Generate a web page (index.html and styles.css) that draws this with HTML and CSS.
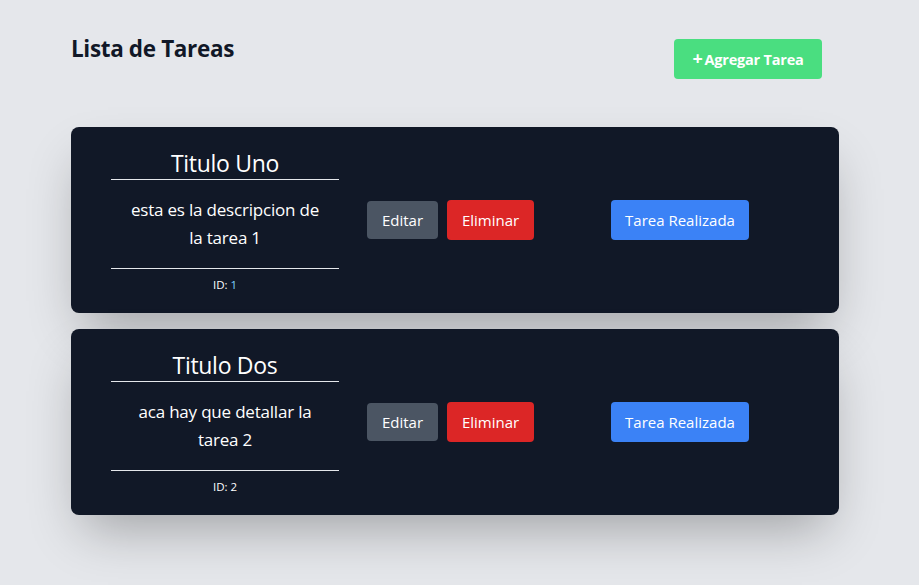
FILE: index.html
```html
<!DOCTYPE html>
<html lang="es">
<head>
<meta charset="utf-8">
<title>Lista de Tareas</title>
<link rel="stylesheet" href="styles.css">
</head>
<body>
<main class="page">
  <header class="header">
    <h1 class="page-title">Lista de Tareas</h1>
    <button class="btn btn-add"><span class="plus">+</span>Agregar Tarea</button>
  </header>
  <section class="list">
    <article class="card">
      <div class="info">
        <h2 class="task-title">Titulo Uno</h2>
        <p class="task-desc">esta es la descripcion de la tarea 1</p>
        <p class="task-id">ID: <span class="id-num">1</span></p>
      </div>
      <div class="actions">
        <button class="btn btn-edit">Editar</button>
        <button class="btn btn-delete">Eliminar</button>
      </div>
      <button class="btn btn-done">Tarea Realizada</button>
    </article>
    <article class="card">
      <div class="info">
        <h2 class="task-title">Titulo Dos</h2>
        <p class="task-desc">aca hay que detallar la tarea 2</p>
        <p class="task-id">ID: 2</p>
      </div>
      <div class="actions">
        <button class="btn btn-edit">Editar</button>
        <button class="btn btn-delete">Eliminar</button>
      </div>
      <button class="btn btn-done">Tarea Realizada</button>
    </article>
  </section>
</main>
</body>
</html>
```
FILE: styles.css
```css
* { box-sizing: border-box; }
html, body {
  margin: 0;
  padding: 0;
  background: #e5e7eb;
  font-family: "Open Sans", "Noto Sans", sans-serif;
  color: #111827;
}
body { min-height: 100vh; }
.page {
  width: 768px;
  margin-left: 71px;
  padding-top: 33px;
  padding-bottom: 70px;
}
.header {
  display: flex;
  justify-content: space-between;
  align-items: flex-start;
  padding-right: 17px;
  margin-bottom: 48px;
}
.page-title {
  margin: 0;
  font-size: 22.5px;
  line-height: 32px;
  font-weight: 700;
  letter-spacing: -0.35px;
  color: #111827;
}
.btn {
  border: none;
  border-radius: 4px;
  font-family: inherit;
  font-size: 15px;
  color: #ffffff;
  height: 40px;
  padding: 0 16px;
  cursor: pointer;
}
.btn-add {
  margin-top: 6px;
  width: 148px;
  background: #4ade80;
  font-weight: 700;
  font-size: 14.5px;
  letter-spacing: -0.2px;
  display: flex;
  align-items: center;
  justify-content: center;
  gap: 2px;
}
.plus { font-size: 18px; font-weight: 700; line-height: 1; margin-top: -2px; }
.list {
  display: flex;
  flex-direction: column;
  gap: 16px;
}
.card {
  background: #111827;
  border-radius: 8px;
  padding: 20px 40px;
  display: flex;
  align-items: center;
  box-shadow: 0 25px 50px -12px rgba(0, 0, 0, 0.3);
}
.info {
  width: 228px;
  text-align: center;
  color: #ffffff;
}
.task-title {
  margin: 0;
  font-size: 23px;
  line-height: 32px;
  font-weight: 400;
  letter-spacing: -0.3px;
  border-bottom: 1px solid #e5e7eb;
}
.task-desc {
  margin: 0;
  padding: 16px 16px;
  font-size: 17px;
  line-height: 28px;
  letter-spacing: -0.2px;
  border-bottom: 1px solid #e5e7eb;
}
.task-id {
  margin: 8px 0 0;
  font-size: 11.5px;
  line-height: 16px;
}
.id-num { color: #7dd3fc; }
.actions {
  display: flex;
  align-items: center;
  gap: 9px;
  margin-left: 28px;
}
.btn-edit {
  background: #4b5563;
  height: 38px;
  width: 71px;
  padding: 0;
}
.btn-delete {
  background: #dc2626;
  width: 87px;
  padding: 0;
}
.btn-done {
  margin-left: 77px;
  background: #3b82f6;
  width: 138px;
  padding: 0;
}
```
